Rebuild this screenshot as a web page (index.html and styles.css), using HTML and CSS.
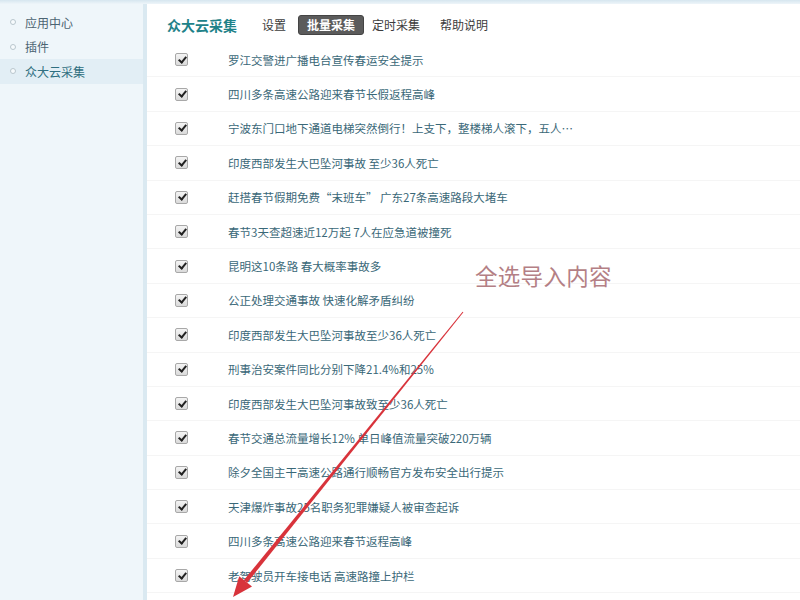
FILE: index.html
```html
<!DOCTYPE html>
<html lang="zh-CN">
<head>
<meta charset="utf-8">
<title>众大云采集</title>
<link rel="stylesheet" href="styles.css">
</head>
<body>
<div class="topline"></div>
<div class="app">
  <aside class="sidebar">
    <div class="nav-item"><span class="dot"></span>应用中心</div>
    <div class="nav-item"><span class="dot"></span>插件</div>
    <div class="nav-item active"><span class="dot"></span>众大云采集</div>
  </aside>
  <main class="main">
    <div class="header">
      <span class="title">众大云采集</span>
      <span class="tab t1">设置</span>
      <span class="tab t2 current">批量采集</span>
      <span class="tab t3">定时采集</span>
      <span class="tab t4">帮助说明</span>
    </div>
    <ul class="list">
      <li class="row"><span class="cb"></span><span class="txt">罗江交警进广播电台宣传春运安全提示</span></li>
      <li class="row"><span class="cb"></span><span class="txt">四川多条高速公路迎来春节长假返程高峰</span></li>
      <li class="row"><span class="cb"></span><span class="txt">宁波东门口地下通道电梯突然倒行！上支下，整楼梯人滚下，五人…</span></li>
      <li class="row"><span class="cb"></span><span class="txt">印度西部发生大巴坠河事故 至少36人死亡</span></li>
      <li class="row"><span class="cb"></span><span class="txt">赶搭春节假期免费“末班车” 广东27条高速路段大堵车</span></li>
      <li class="row"><span class="cb"></span><span class="txt">春节3天查超速近12万起 7人在应急道被撞死</span></li>
      <li class="row"><span class="cb"></span><span class="txt">昆明这10条路 春大概率事故多</span></li>
      <li class="row"><span class="cb"></span><span class="txt">公正处理交通事故 快速化解矛盾纠纷</span></li>
      <li class="row"><span class="cb"></span><span class="txt">印度西部发生大巴坠河事故至少36人死亡</span></li>
      <li class="row"><span class="cb"></span><span class="txt">刑事治安案件同比分别下降21.4%和25%</span></li>
      <li class="row"><span class="cb"></span><span class="txt">印度西部发生大巴坠河事故致至少36人死亡</span></li>
      <li class="row"><span class="cb"></span><span class="txt">春节交通总流量增长12% 单日峰值流量突破220万辆</span></li>
      <li class="row"><span class="cb"></span><span class="txt">除夕全国主干高速公路通行顺畅官方发布安全出行提示</span></li>
      <li class="row"><span class="cb"></span><span class="txt">天津爆炸事故25名职务犯罪嫌疑人被审查起诉</span></li>
      <li class="row"><span class="cb"></span><span class="txt">四川多条高速公路迎来春节返程高峰</span></li>
      <li class="row"><span class="cb"></span><span class="txt">老驾驶员开车接电话 高速路撞上护栏</span></li>
    </ul>
  </main>
</div>
<div class="note">全选导入内容</div>
<svg class="arrow" width="800" height="600" viewBox="0 0 800 600">
  <polygon points="463.4,312.3 462.6,311.7 244.0,580.1 247.2,582.7" fill="#d8333b"/>
  <polygon points="252.0,586.6 239.2,576.2 233,597" fill="#d8333b"/>
</svg>
</body>
</html>
```
FILE: styles.css
```css
html, body {
  margin: 0;
  padding: 0;
}
body {
  width: 800px;
  height: 600px;
  overflow: hidden;
  position: relative;
  background: #ffffff;
  font-family: "Noto Sans CJK SC", "Noto Sans", sans-serif;
}
.topline {
  height: 4px;
  background: linear-gradient(#d6e6ef, #eef5f9);
}
.app {
  display: flex;
  height: 596px;
}
.sidebar {
  width: 143px;
  flex: none;
  background: #eff6fa;
  border-right: 4px solid #dae9f1;
  padding-top: 6px;
  box-sizing: content-box;
}
.nav-item {
  display: flex;
  align-items: center;
  height: 24.5px;
  font-size: 12px;
  color: #4c6472;
  padding-left: 10px;
}
.nav-item.active {
  background: #e2eef5;
  color: #2f6f80;
}
.dot {
  width: 4px;
  height: 4px;
  border: 1px solid #b9c6cd;
  border-radius: 50%;
  margin-right: 9px;
  background: #f7fbfd;
}
.main {
  flex: 1;
  min-width: 0;
}
.header {
  height: 39px;
  display: flex;
  align-items: center;
  padding-left: 20px;
  box-sizing: border-box;
  padding-top: 3px;
}
.title {
  font-size: 14px;
  font-weight: bold;
  color: #1f8289;
}
.tab {
  font-size: 12px;
  color: #3c3c3c;
  padding: 1px 6px 2px;
  line-height: 15px;
}
.t1 { margin-left: 19px; }
.t2 { margin-left: 6px; padding: 1px 8px 2px; }
.t3 { margin-left: 2px; }
.t4 { margin-left: 8px; }
.tab.current {
  background: #5b5b5b;
  color: #ffffff;
  border-radius: 3px;
  font-weight: bold;
  border: 1px solid #444;
}
.list {
  list-style: none;
  margin: 0;
  padding: 0;
}
.row {
  height: 34.4px;
  display: flex;
  align-items: center;
  padding-left: 28px;
  border-bottom: 1px solid #f5f5f5;
  box-sizing: border-box;
}
.cb {
  width: 11px;
  height: 11px;
  border: 1px solid #a8a8a8;
  border-radius: 2px;
  background: linear-gradient(#f4f4f4, #dadada);
  position: relative;
  flex: none;
}
.cb::after {
  content: "";
  position: absolute;
  left: 3.5px;
  top: 0.5px;
  width: 3px;
  height: 6px;
  border-right: 2px solid #222;
  border-bottom: 2px solid #222;
  transform: rotate(40deg);
}
.txt {
  margin-left: 40px;
  font-size: 11.5px;
  color: #3a6878;
  white-space: nowrap;
}
.note {
  position: absolute;
  left: 475px;
  top: 259px;
  font-size: 22.5px;
  color: #b47f85;
  font-weight: 400;
  letter-spacing: 0.3px;
}
.arrow {
  position: absolute;
  left: 0;
  top: 0;
  pointer-events: none;
}
```
